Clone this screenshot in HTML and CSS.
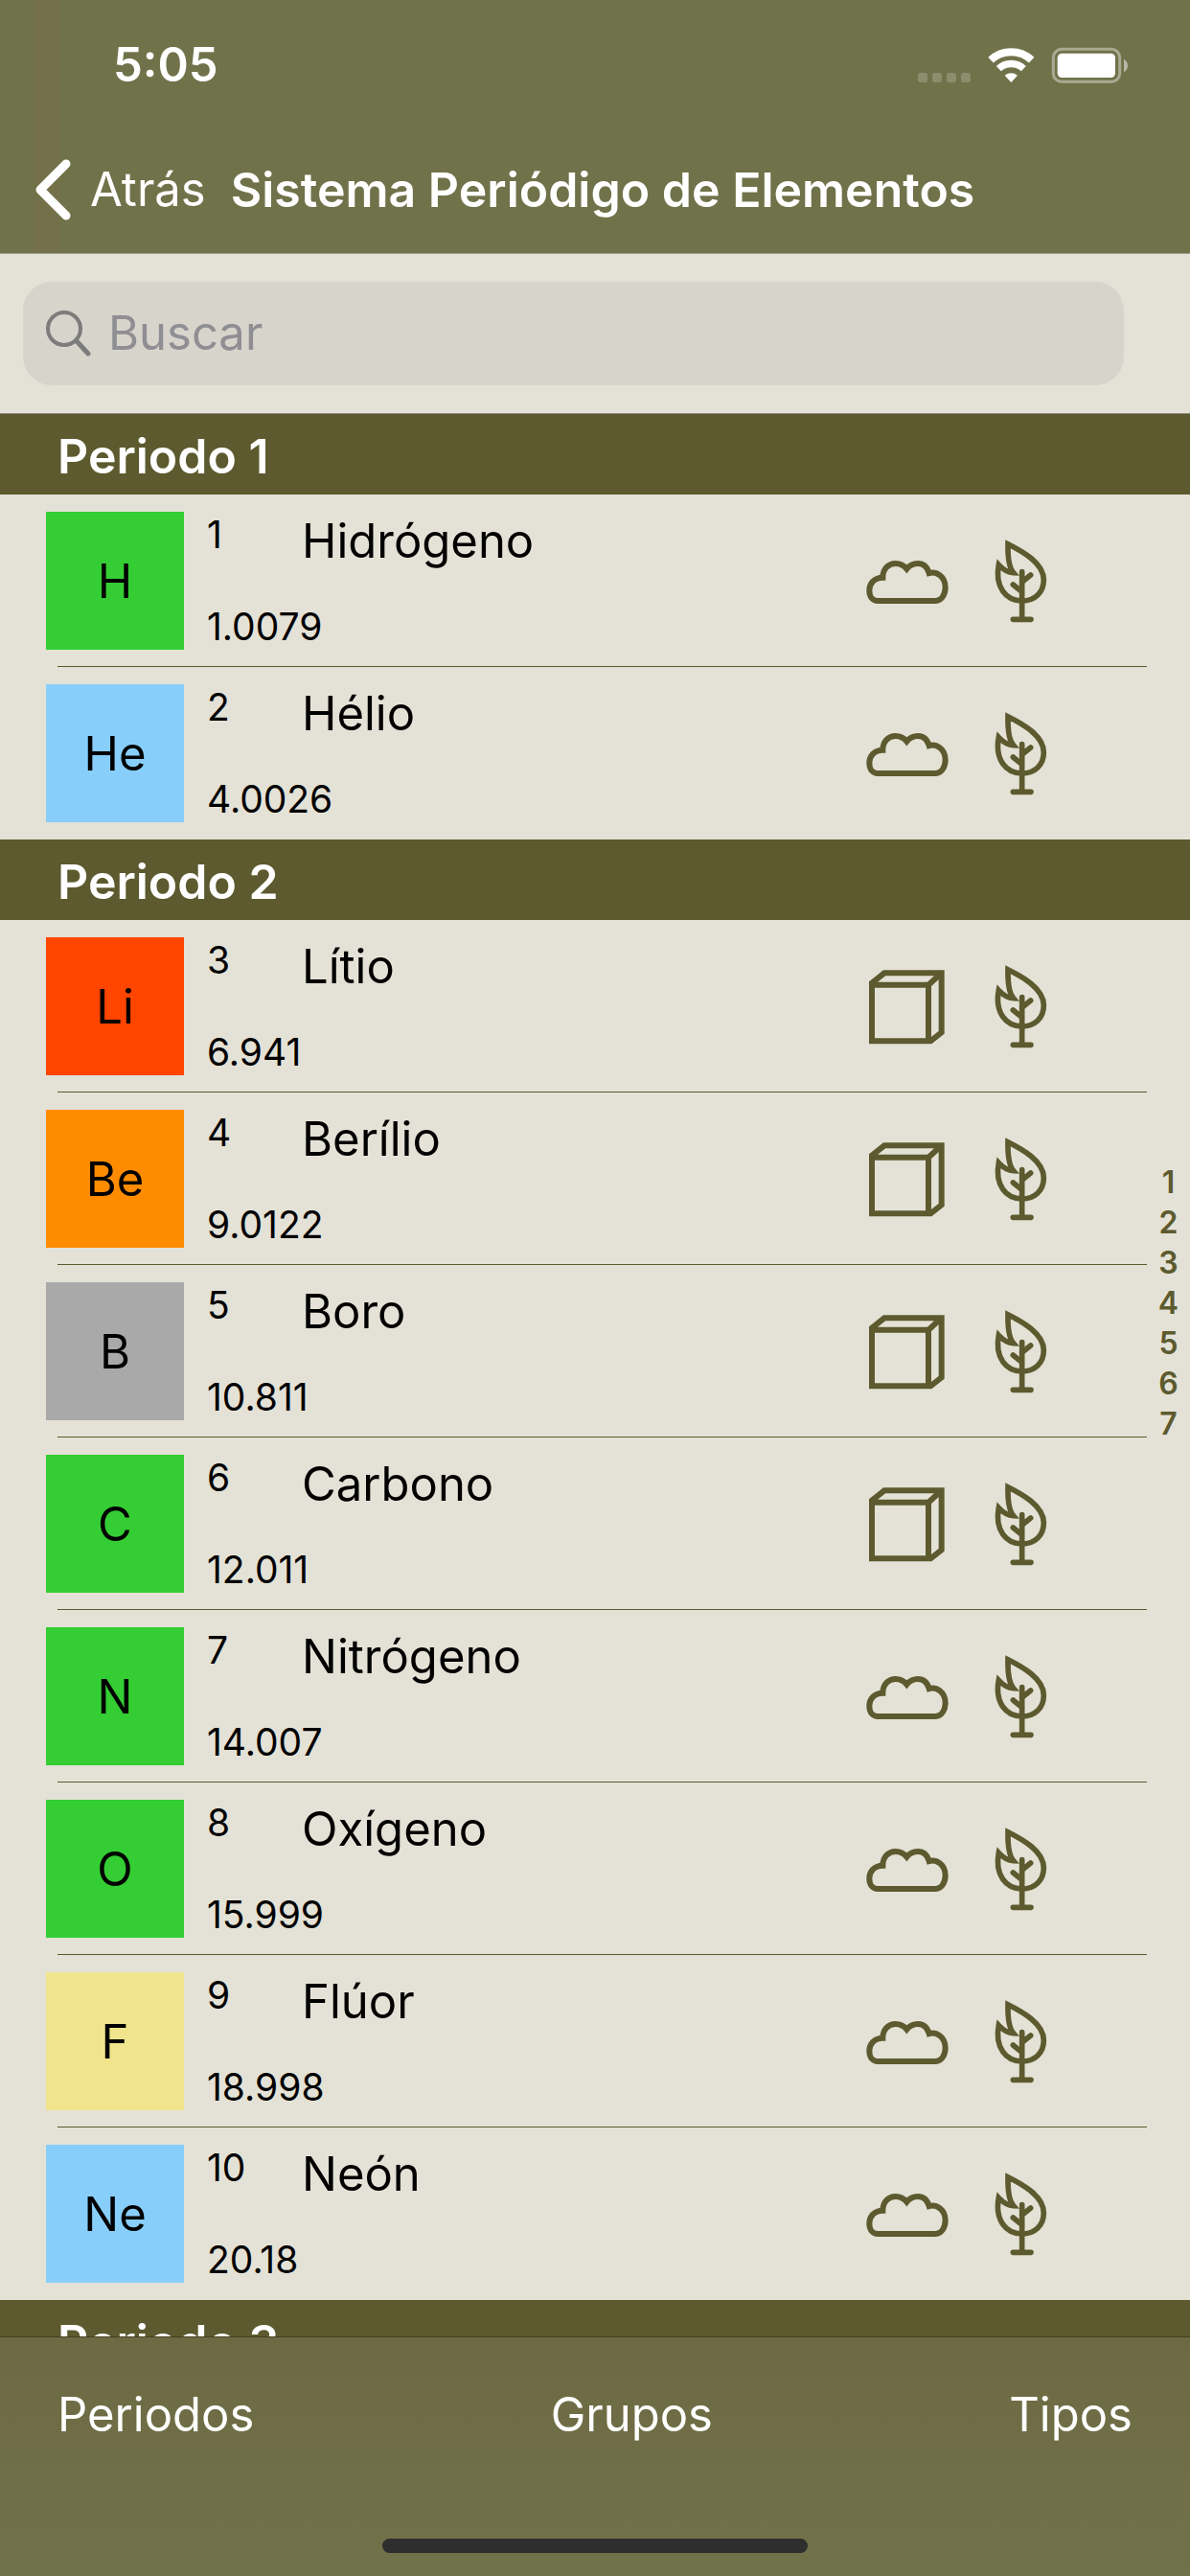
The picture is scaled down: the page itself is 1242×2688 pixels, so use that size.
FILE: index.html
```html
<!DOCTYPE html>
<html lang="es">
<head>
<meta charset="utf-8">
<meta name="viewport" content="width=device-width, initial-scale=1">
<title>Sistema Periódigo de Elementos</title>
<link rel="stylesheet" href="styles.css">
</head>
<body>
<svg class="sprite" aria-hidden="true">
  <symbol id="gas" viewBox="66 93 270 270">
    <path fill="none" stroke="currentColor" stroke-width="18" d="M108 291H290C307 291 320 272 320 249C320 214 292 198 269 204C264 187 252 174 234 174C218 174 206 182 199 191C192 182 180 174 164 174C142 174 124 190 124 218C98 218 82 236 82 258C82 278 92 291 108 291Z"/>
  </symbol>
  <symbol id="solid" viewBox="66 75 270 270">
    <path fill="none" stroke="currentColor" stroke-width="18" d="M90 319V137L129 106H308V292L274 319ZM90 143H267V319M267 143L308 106"/>
  </symbol>
  <symbol id="natural" viewBox="420 93 270 270">
    <path fill="none" stroke="currentColor" stroke-width="17" d="M516 113C560 135 628 172 628 225C628 265 600 291 560 291C510 291 474 248 487 178C500 192 514 202 533 203C522 190 515 158 516 113Z"/>
    <path fill="none" stroke="currentColor" stroke-width="17" stroke-linecap="round" d="M560 200V349M532 349H588M560 232L587 210M532 240L560 263"/>
  </symbol>
</svg>

<div class="app">
  <header class="top">
    <div class="status">
      <span class="time">5:05</span>
      <svg class="status-icons" viewBox="168 24 666 117" aria-hidden="true">
        <g fill="#8c8d6d"><rect x="174" y="105" width="30" height="30" rx="8"/><rect x="219" y="105" width="30" height="30" rx="8"/><rect x="264" y="105" width="30" height="30" rx="8"/><rect x="309" y="105" width="30" height="30" rx="8"/></g>
        <path fill="none" stroke="#fff" stroke-width="24" d="M402 65A94 94 0 0 1 530 65"/>
        <path fill="none" stroke="#fff" stroke-width="22" d="M427 92A57 57 0 0 1 505 92"/>
        <path fill="#fff" d="M466 135L446 113A31 31 0 0 1 486 113Z"/>
        <rect x="598" y="31" width="208" height="102" rx="26" fill="none" stroke="#a9aa92" stroke-width="9"/>
        <rect x="611" y="44" width="181" height="76" rx="14" fill="#fff"/>
        <path fill="#b7b8a4" d="M819 62C835 70 835 95 819 103Z"/>
      </svg>
    </div>
    <nav class="nav">
      <a class="back" href="#">
        <svg class="chevron" viewBox="0 0 40 66" aria-hidden="true"><path fill="none" stroke="#fff" stroke-width="9" stroke-linecap="round" stroke-linejoin="round" d="M35 6L8 33L35 60"/></svg>
        Atrás
      </a>
      <h1 class="title">Sistema Periódigo de Elementos</h1>
    </nav>
  </header>

  <main class="content">
    <form class="search" role="search">
      <label class="field">
        <svg class="glass" viewBox="0 0 48 51" aria-hidden="true"><g fill="none" stroke="#7c7c7c" stroke-linecap="round"><circle cx="20" cy="21" r="17" stroke-width="4"/><path stroke-width="5" d="M33 34L45 47"/></g></svg>
        <input class="input" type="search" aria-label="Buscar" placeholder="Buscar">
      </label>
    </form>

    <div class="list">
      <section id="p1">
        <h2 class="period">Periodo 1</h2>
        <ul class="rows">
          <li class="row"><span class="symbol nonmetal">H</span><span class="number">1</span><span class="name">Hidrógeno</span><span class="mass">1.0079</span><svg class="icon state"><use href="#gas"/></svg><svg class="icon"><use href="#natural"/></svg></li>
          <li class="row"><span class="symbol noble">He</span><span class="number">2</span><span class="name">Hélio</span><span class="mass">4.0026</span><svg class="icon state"><use href="#gas"/></svg><svg class="icon"><use href="#natural"/></svg></li>
        </ul>
      </section>
      <section id="p2">
        <h2 class="period">Periodo 2</h2>
        <ul class="rows">
          <li class="row"><span class="symbol alkali">Li</span><span class="number">3</span><span class="name">Lítio</span><span class="mass">6.941</span><svg class="icon state"><use href="#solid"/></svg><svg class="icon"><use href="#natural"/></svg></li>
          <li class="row"><span class="symbol alkaline">Be</span><span class="number">4</span><span class="name">Berílio</span><span class="mass">9.0122</span><svg class="icon state"><use href="#solid"/></svg><svg class="icon"><use href="#natural"/></svg></li>
          <li class="row"><span class="symbol metalloid">B</span><span class="number">5</span><span class="name">Boro</span><span class="mass">10.811</span><svg class="icon state"><use href="#solid"/></svg><svg class="icon"><use href="#natural"/></svg></li>
          <li class="row"><span class="symbol nonmetal">C</span><span class="number">6</span><span class="name">Carbono</span><span class="mass">12.011</span><svg class="icon state"><use href="#solid"/></svg><svg class="icon"><use href="#natural"/></svg></li>
          <li class="row"><span class="symbol nonmetal">N</span><span class="number">7</span><span class="name">Nitrógeno</span><span class="mass">14.007</span><svg class="icon state"><use href="#gas"/></svg><svg class="icon"><use href="#natural"/></svg></li>
          <li class="row"><span class="symbol nonmetal">O</span><span class="number">8</span><span class="name">Oxígeno</span><span class="mass">15.999</span><svg class="icon state"><use href="#gas"/></svg><svg class="icon"><use href="#natural"/></svg></li>
          <li class="row"><span class="symbol halogen">F</span><span class="number">9</span><span class="name">Flúor</span><span class="mass">18.998</span><svg class="icon state"><use href="#gas"/></svg><svg class="icon"><use href="#natural"/></svg></li>
          <li class="row"><span class="symbol noble">Ne</span><span class="number">10</span><span class="name">Neón</span><span class="mass">20.18</span><svg class="icon state"><use href="#gas"/></svg><svg class="icon"><use href="#natural"/></svg></li>
        </ul>
      </section>
      <section id="p3">
        <h2 class="period">Periodo 3</h2>
      </section>
    </div>

    <nav class="index" aria-label="Periodos">
      <a href="#p1">1</a><a href="#p2">2</a><a href="#p3">3</a><a href="#p4">4</a><a href="#p5">5</a><a href="#p6">6</a><a href="#p7">7</a>
    </nav>
  </main>

  <footer class="bottom">
    <div class="tools">
      <button class="tool" type="button">Periodos</button>
      <button class="tool" type="button">Grupos</button>
      <button class="tool" type="button">Tipos</button>
    </div>
    <div class="home"></div>
  </footer>
</div>
</body>
</html>
```
FILE: styles.css
```css
:root {
  --olive: #5c5a2e;
  --bar: #70724a;
  --paper: #e4e2d6;
}

* { box-sizing: border-box; }

body {
  margin: 0;
  background: var(--paper);
  color: #000;
  font-family: Inter, "Liberation Sans", sans-serif;
  font-size: 49px;
  line-height: 60px;
}

h1, h2 {
  margin: 0;
  font-size: 50px;
  font-weight: 600;
}

a {
  color: inherit;
  text-decoration: none;
}

.sprite {
  display: none;
}

.app {
  display: flex;
  flex-direction: column;
  height: 100vh;
}

/* Status and navigation bars */
.top {
  background: linear-gradient(to right, var(--bar) 36px, #73704a 36px 62px, var(--bar) 62px);
  border-bottom: 1px solid #9c9c8c;
  color: #fff;
}

.status {
  display: flex;
  align-items: center;
  justify-content: space-between;
  height: 132px;
  padding: 4px 64px 0 118px;
}

.time { font-weight: 600; }

.status-icons {
  width: 222px;
  height: 39px;
}

.nav {
  display: flex;
  align-items: center;
  gap: 26px;
  height: 132px;
  padding-left: 34px;
}

.back {
  display: flex;
  align-items: center;
  gap: 20px;
}

.chevron {
  width: 40px;
  height: 66px;
}

.title { white-space: nowrap; }

/* Search */
.content {
  position: relative;
  flex: 1;
  display: flex;
  flex-direction: column;
  min-height: 0;
}

.search {
  padding: 29px 69px 29px 24px;
  border-bottom: 1px solid #8b8b80;
}

.field {
  display: flex;
  align-items: center;
  gap: 18px;
  height: 108px;
  padding: 0 24px 2px 23px;
  border-radius: 30px;
  background: #d7d4cc;
}

.glass {
  width: 48px;
  height: 51px;
}

.input {
  flex: 1;
  min-width: 0;
  height: 100%;
  padding: 0;
  border: 0;
  outline: 0;
  background: none;
  font: inherit;
  appearance: none;
}

.input::placeholder { color: #8e8e93; }

/* Element list */
.list {
  flex: 1;
  min-height: 0;
  overflow: hidden;
}

.period {
  height: 84px;
  padding: 14px 60px 10px;
  background: var(--olive);
  color: #fff;
}

.rows {
  margin: 0;
  padding: 0;
  list-style: none;
}

.row {
  display: grid;
  grid-template-columns: 168px 99px 1fr 118px 90px;
  grid-template-rows: 96px 48px;
  padding: 18px 132px 18px 48px;
}

.row:not(:last-child) {
  background: linear-gradient(var(--olive), var(--olive)) 60px 100% / calc(100% - 105px) 1px no-repeat;
}

.symbol {
  grid-row: 1 / 3;
  width: 144px;
  height: 144px;
  line-height: 146px;
  text-align: center;
}

.number,
.mass {
  font-size: 39px;
  line-height: 48px;
}

.name { line-height: 62px; }

.mass { grid-area: 2 / 2 / 3 / 4; }

.icon {
  grid-row: 1 / 3;
  grid-column: 5;
  align-self: center;
  width: 90px;
  height: 90px;
  color: var(--olive);
}

.state { grid-column: 4; }

.nonmetal { background: #34cd34; }
.noble { background: #87cefa; }
.alkali { background: #ff4500; }
.alkaline { background: #ff8c00; }
.metalloid { background: #a9a9a9; }
.halogen { background: #f0e58c; }

/* Section index over the right edge of the list */
.index {
  position: absolute;
  inset: 0 0 0 auto;
  display: flex;
  flex-direction: column;
  justify-content: center;
  width: 45px;
  padding-top: 17px;
  color: var(--olive);
  font-size: 32px;
  font-weight: 600;
  line-height: 42px;
  text-align: center;
}

/* Toolbar */
.bottom {
  padding-bottom: 24px;
  border-top: 1px solid #42411f;
  background: linear-gradient(#6d6a43, #706e47 50%, var(--bar));
}

.tools {
  display: flex;
  align-items: center;
  justify-content: space-between;
  height: 210px;
  padding: 15px 60px 63px;
}

.tool {
  padding: 0;
  border: 0;
  background: none;
  color: #fff;
  font: inherit;
}

.home {
  width: 444px;
  height: 15px;
  margin: 0 auto;
  border-radius: 8px;
  background: #2e2e2e;
}
```
